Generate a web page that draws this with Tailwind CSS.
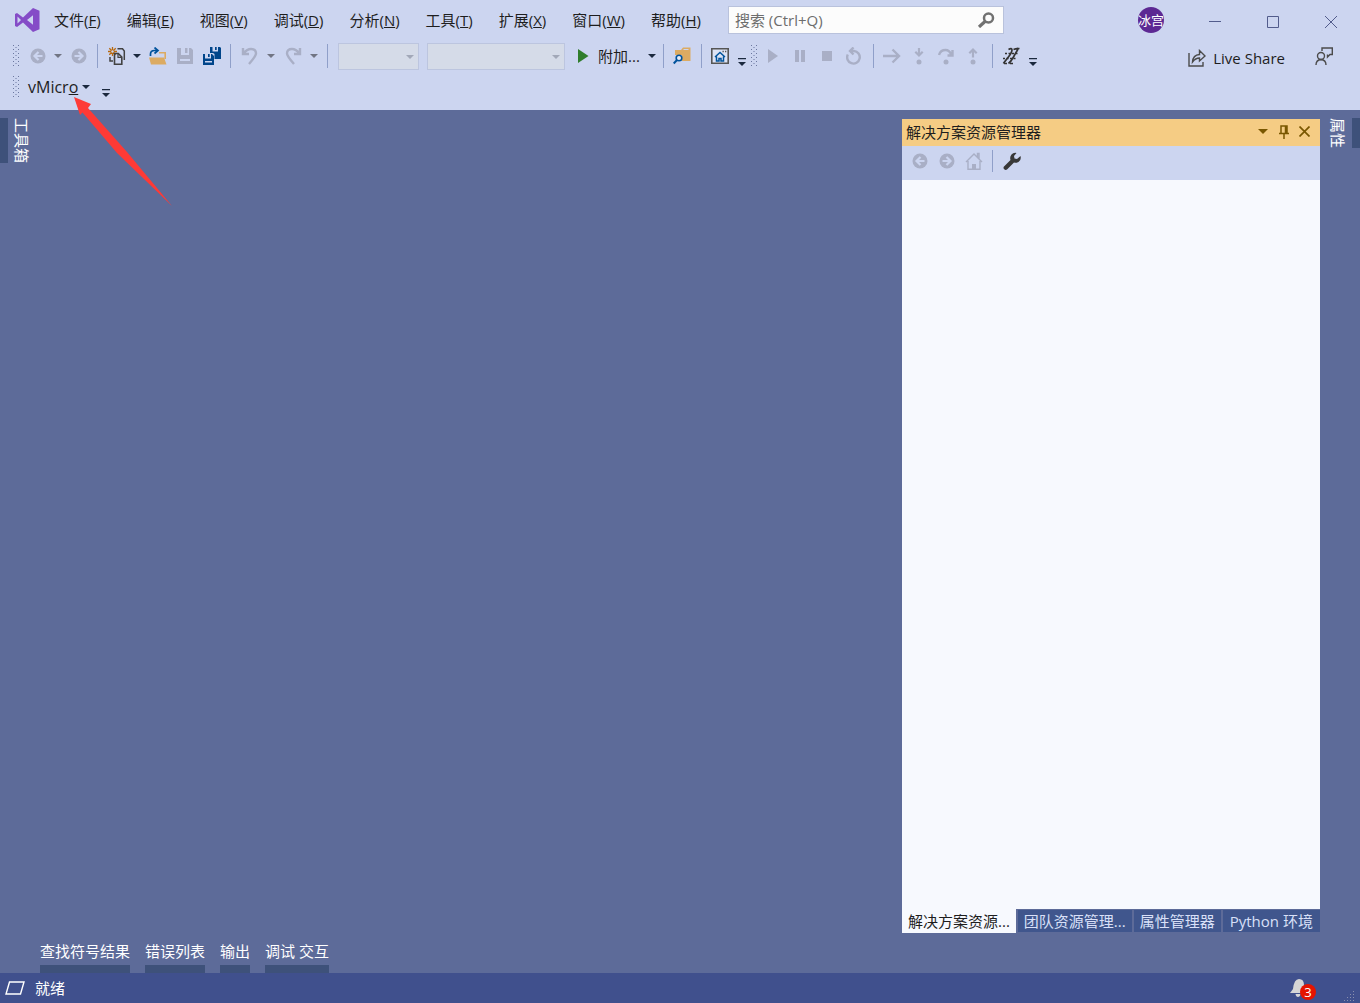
<!DOCTYPE html>
<html lang="zh-CN">
<head>
  <meta charset="UTF-8" />
  <meta name="viewport" content="width=device-width, initial-scale=1" />
  <title>Visual Studio</title>
  <script src="https://cdn.jsdelivr.net/npm/@tailwindcss/browser@4"></script>
</head>
<body class="relative flex min-h-screen flex-col bg-[#5d6b99] font-['Open_Sans','Noto_Sans_CJK_SC',sans-serif] text-[15px] leading-5 text-[#1e1e1e]">

  <!-- Shared icons -->
  <svg class="absolute size-0" aria-hidden="true">
    <symbol id="caret" viewBox="0 0 8 4"><path d="M0 0h8L4 4z" fill="currentColor" /></symbol>
    <symbol id="back" viewBox="0 0 16 16">
      <circle cx="8" cy="8" r="7.5" fill="#a9afc6" />
      <path d="M12.5 8H5M8.500 4 4.500 8l4 4" fill="none" stroke="#ccd5f0" stroke-width="2.200" />
    </symbol>
    <symbol id="forward" viewBox="0 0 16 16">
      <circle cx="8" cy="8" r="7.5" fill="#a9afc6" />
      <path d="M3.500 8H11M7.500 4l4 4-4 4" fill="none" stroke="#ccd5f0" stroke-width="2.200" />
    </symbol>
    <symbol id="overflow" viewBox="0 0 8 8">
      <path d="M0 0h8v1.300H0zM0 4h8L4 8z" fill="#1b293e" />
    </symbol>
    <symbol id="grip" viewBox="0 0 8 22">
      <path d="M1.500 0v22M6.500 0v22" stroke="#6b779f" stroke-dasharray="1 3" />
      <path d="M4 2v20" stroke="#6b779f" stroke-dasharray="1 3" />
    </symbol>
  </svg>

  <header class="bg-[#ccd5f0] pb-2">
    <!-- Title bar -->
    <div class="flex h-10 items-center">
      <svg class="mr-px ml-[15px] h-6 w-[25px] shrink-0" viewBox="0 0 25 24" aria-label="Visual Studio">
        <path fill-rule="evenodd" fill="#854cc7" d="M18 0 24.500 2.700v18.600L18 24 8 14.500 2 19 0 18V6l2-1 6 4.500zM18 7.300 12 12l6 4.700zM2.500 8.500v7L6 12z" />
      </svg>
      <nav class="flex shrink-0">
        <button class="px-[13px] whitespace-nowrap">文件(<u>F</u>)</button>
        <button class="px-[13px] whitespace-nowrap">编辑(<u>E</u>)</button>
        <button class="px-[13px] whitespace-nowrap">视图(<u>V</u>)</button>
        <button class="px-[13px] whitespace-nowrap">调试(<u>D</u>)</button>
        <button class="px-[13px] whitespace-nowrap">分析(<u>N</u>)</button>
        <button class="px-[13px] whitespace-nowrap">工具(<u>T</u>)</button>
        <button class="px-[13px] whitespace-nowrap">扩展(<u>X</u>)</button>
        <button class="px-[13px] whitespace-nowrap">窗口(<u>W</u>)</button>
        <button class="px-[13px] whitespace-nowrap">帮助(<u>H</u>)</button>
      </nav>
      <div class="ml-[14px] flex h-7 w-[276px] items-center border border-[#b9c2dc] bg-[#fcfcfc] pr-2 pl-1.5">
        <input type="text" aria-label="搜索" placeholder="搜索 (Ctrl+Q)" class="min-w-0 flex-1 bg-transparent outline-none placeholder:text-[#6d6d6d]" />
        <svg class="h-4 w-[18px]" viewBox="0 0 18 16">
          <circle cx="11.500" cy="6" r="4.500" fill="none" stroke="#717171" stroke-width="2.500" />
          <path d="M8.500 9 2 15" stroke="#717171" stroke-width="3.200" />
        </svg>
      </div>
      <div class="mr-[22px] ml-auto flex size-[26px] items-center justify-center overflow-hidden rounded-full bg-[#5c2893] text-[13px] whitespace-nowrap text-white">冰宫</div>
      <button class="flex w-[58px] justify-center" aria-label="最小化"><svg class="size-3" viewBox="0 0 12 12"><path d="M0 7.500h12" stroke="#525c8c" /></svg></button>
      <button class="flex w-[58px] justify-center pt-1" aria-label="最大化"><svg class="size-3" viewBox="0 0 12 12"><path d="M.5.5h11v11H.5z" fill="none" stroke="#525c8c" /></svg></button>
      <button class="flex w-[58px] justify-center pt-1" aria-label="关闭"><svg class="size-3" viewBox="0 0 12 12"><path d="m0 0 12 12M12 0 0 12" stroke="#525c8c" /></svg></button>
    </div>

    <!-- Standard and debug toolbars -->
    <div class="flex h-8 items-center pr-[27px] pl-3">
      <svg class="mr-1 h-[22px] w-2"><use href="#grip" /></svg>
      <button class="flex w-[27px] justify-center" aria-label="后退" disabled><svg class="size-4"><use href="#back" /></svg></button>
      <button class="flex w-[14px] justify-center text-[#717583]" aria-label="后退历史"><svg class="h-1 w-2"><use href="#caret" /></svg></button>
      <button class="flex w-[27px] justify-center" aria-label="前进" disabled><svg class="size-4"><use href="#forward" /></svg></button>
      <span class="flex w-[11px] justify-center"><span class="h-6 w-px bg-[#8f9fc9]"></span></span>
      <button class="flex w-[27px] justify-center" aria-label="新建项目">
        <svg class="size-[18px]" viewBox="0 0 18 18">
          <path d="M4.500 0v9M0 4.500h9M1.300 1.300l6.400 6.400M7.700 1.300 1.300 7.700" stroke="#b9690e" stroke-width="1.300" />
          <circle cx="4.500" cy="4.500" r="1.200" fill="#ccd5f0" />
          <path d="M9.500 1.700h5L16.300 4v9M2 10v4h3" fill="none" stroke="#424242" stroke-width="1.500" />
          <path d="M6.500 17.200V6.500h3.800l3.500 3.500v7.200z" fill="none" stroke="#424242" stroke-width="1.600" />
          <path d="M10 6.500v3.800h3.800" fill="none" stroke="#424242" stroke-width="1.200" />
        </svg>
      </button>
      <button class="flex w-[14px] justify-center text-[#1b293e]" aria-label="新建列表"><svg class="h-1 w-2"><use href="#caret" /></svg></button>
      <button class="flex w-[27px] justify-center" aria-label="打开">
        <svg class="size-[18px]" viewBox="0 0 18 18">
          <path d="M1.500 9V7q0-3.500 4-3.500h3M5.500.500 9 3.500l-3.500 3" fill="none" stroke="#00539c" stroke-width="1.700" />
          <path d="M10 5.700h6.200V12" fill="none" stroke="#dcab62" stroke-width="1.600" />
          <path d="M0 10.500h3.500L5.500 17.500H2zM3.500 10.500h11.500l2.500 7H3.500z" fill="#dcab62" />
        </svg>
      </button>
      <button class="flex w-[27px] justify-center" aria-label="保存" disabled>
        <svg class="size-4" viewBox="0 0 16 16"><path fill-rule="evenodd" fill="#a9afc6" d="M0 0h4v7h8V0h2l2 2v14H0zM8 0h2.500v5H8zM3 11v2h10v-2z" /></svg>
      </button>
      <button class="flex w-[27px] justify-center" aria-label="全部保存">
        <svg class="size-[18px]" viewBox="0 0 18 18">
          <path fill="#00458a" d="M7 0h2.500v4.500H15V0h2l1 1v11h-6.500V7L10 6H7zM12 0h1.700v3H12z" />
          <path fill="#00458a" d="M0 7h2v4.500h6V7h1l2 2v9H0zM5 7h1.700v3H5z" />
          <path fill="#ccd5f0" d="M2 14h7v1.500H2z" />
        </svg>
      </button>
      <span class="flex w-[11px] justify-center"><span class="h-6 w-px bg-[#8f9fc9]"></span></span>
      <button class="flex w-[27px] justify-center" aria-label="撤消" disabled>
        <svg class="size-[18px]" viewBox="0 0 18 18"><path d="M2 1v6h6M2.500 6.500Q6 2 10 2q5 0 5 4.500Q15 9 8 17" fill="none" stroke="#a9afc6" stroke-width="2.400" /></svg>
      </button>
      <button class="flex w-4 justify-center text-[#717583]" aria-label="撤消列表"><svg class="h-1 w-2"><use href="#caret" /></svg></button>
      <button class="flex w-[27px] justify-center" aria-label="恢复" disabled>
        <svg class="size-[18px]" viewBox="0 0 18 18"><path d="M16 1v6h-6M15.500 6.500Q12 2 8 2 3 2 3 6.500 3 9 10 17" fill="none" stroke="#a9afc6" stroke-width="2.400" /></svg>
      </button>
      <button class="flex w-4 justify-center text-[#717583]" aria-label="恢复列表"><svg class="h-1 w-2"><use href="#caret" /></svg></button>
      <span class="flex w-[11px] justify-center"><span class="h-6 w-px bg-[#8f9fc9]"></span></span>
      <div class="relative ml-[5px] text-[#a2a8b8]">
        <select class="block h-[27px] w-[81px] appearance-none border border-[#bcc5df] bg-[#d5dbe8]" aria-label="解决方案配置" disabled></select>
        <svg class="absolute top-3 right-[5px] h-1 w-2"><use href="#caret" /></svg>
      </div>
      <div class="relative ml-2 text-[#a2a8b8]">
        <select class="block h-[27px] w-[138px] appearance-none border border-[#bcc5df] bg-[#d5dbe8]" aria-label="解决方案平台" disabled></select>
        <svg class="absolute top-3 right-[5px] h-1 w-2"><use href="#caret" /></svg>
      </div>
      <button class="ml-2 flex items-center gap-2 pr-0.5 pl-[5px] whitespace-nowrap">
        <svg class="h-[14px] w-3" viewBox="0 0 12 14"><path d="M0 0v14l10.500-7z" fill="#2f7d2c" /></svg>
        附加...
        <svg class="h-1 w-2 text-[#1b293e]"><use href="#caret" /></svg>
      </button>
      <span class="flex w-[11px] justify-center"><span class="h-6 w-px bg-[#8f9fc9]"></span></span>
      <button class="flex w-[27px] justify-center" aria-label="在文件中查找">
        <svg class="size-[18px]" viewBox="0 0 18 18">
          <path d="M2 3h6l2-2.500h7.500V14H9V8H2z" fill="#dcab62" />
          <path d="M10.500 2.500h5" stroke="#ccd5f0" />
          <circle cx="6" cy="11" r="2.800" fill="#e9edf8" stroke="#00539c" stroke-width="1.600" />
          <path d="M4 13 .7 16.500" stroke="#00539c" stroke-width="2" />
        </svg>
      </button>
      <span class="flex w-[11px] justify-center"><span class="h-6 w-px bg-[#8f9fc9]"></span></span>
      <button class="flex w-[27px] justify-center" aria-label="起始页">
        <svg class="h-4 w-[18px]" viewBox="0 0 18 16">
          <path d="M.8.8h16.400v14.400H.8z" fill="#dde3f4" stroke="#555" stroke-width="1.600" />
          <path d="M11.500 3.500h1.300M14 3.500h1.300" stroke="#555" stroke-width="1.300" />
          <path d="m4 9 5-4.500L14 9M5.500 8.500V13H8v-2.500h2V13h2.500V8.500" fill="none" stroke="#00539c" stroke-width="1.500" />
        </svg>
      </button>
      <button class="flex w-4 justify-center pt-3" aria-label="工具栏选项"><svg class="size-2"><use href="#overflow" /></svg></button>
      <svg class="mr-0.5 h-[22px] w-2"><use href="#grip" /></svg>
      <button class="flex w-[27px] justify-center" aria-label="继续" disabled><svg class="h-[14px] w-[10px]" viewBox="0 0 10 14"><path d="M0 0v14l10-7z" fill="#a9afc6" /></svg></button>
      <button class="flex w-[27px] justify-center" aria-label="全部中断" disabled><svg class="h-3 w-[10px]" viewBox="0 0 10 12"><path d="M0 0h4v12H0zM6 0h4v12H6z" fill="#a9afc6" /></svg></button>
      <button class="flex w-[27px] justify-center" aria-label="停止调试" disabled><svg class="size-[10px]" viewBox="0 0 10 10"><path d="M0 0h10v10H0z" fill="#a9afc6" /></svg></button>
      <button class="flex w-[27px] justify-center" aria-label="重新启动" disabled>
        <svg class="h-[18px] w-4" viewBox="0 0 16 18"><path d="M1.800 7.500A6.300 6.300 0 1 0 8 4H4M7.500.500 4 4l3.500 3.500" fill="none" stroke="#a9afc6" stroke-width="2.400" /></svg>
      </button>
      <span class="flex w-[11px] justify-center"><span class="h-6 w-px bg-[#8f9fc9]"></span></span>
      <button class="flex w-[27px] justify-center" aria-label="显示下一语句" disabled>
        <svg class="size-[18px]" viewBox="0 0 18 18"><path d="M0 9h16M9.500 2.500 16 9l-6.500 6.500" fill="none" stroke="#a9afc6" stroke-width="2.400" /></svg>
      </button>
      <button class="flex w-[27px] justify-center" aria-label="逐语句" disabled>
        <svg class="h-[18px] w-4" viewBox="0 0 16 18"><path d="M8 1v7M4.300 4.800 8 8.500l3.700-3.700" fill="none" stroke="#a9afc6" stroke-width="2.200" /><circle cx="8" cy="15" r="2.500" fill="#a9afc6" /></svg>
      </button>
      <button class="flex w-[27px] justify-center" aria-label="逐过程" disabled>
        <svg class="h-[18px] w-4" viewBox="0 0 16 18"><path d="M1 8Q2.500 3 7.500 3q4 0 6 5M14.500 3v5.500H9.500" fill="none" stroke="#a9afc6" stroke-width="2.400" /><circle cx="8" cy="15" r="2.500" fill="#a9afc6" /></svg>
      </button>
      <button class="flex w-[27px] justify-center" aria-label="跳出" disabled>
        <svg class="h-[18px] w-4" viewBox="0 0 16 18"><path d="M8 10.500V3M4.300 6.200 8 2.500l3.700 3.700" fill="none" stroke="#a9afc6" stroke-width="2.200" /><circle cx="8" cy="15" r="2.500" fill="#a9afc6" /></svg>
      </button>
      <span class="flex w-[11px] justify-center"><span class="h-6 w-px bg-[#8f9fc9]"></span></span>
      <button class="flex w-[27px] justify-center" aria-label="十六进制显示">
        <svg class="size-[18px]" viewBox="0 0 18 18" fill="none" stroke="#333" stroke-width="1.700">
          <path d="M6.500 2.500Q10 .5 10 3T6 10.500 1.500 16.500M11.500 2.500Q17 .5 15.500 3T11.500 10 6.500 16.500" />
          <path d="M1 11.500h14M3 6.500h13" stroke-dasharray="2 1.500" stroke-width="1.500" />
          <path d="M2 16.500h3M8 16.500h3M15 1.500h2.500" stroke-width="1.500" />
        </svg>
      </button>
      <button class="flex w-4 justify-center pt-3" aria-label="工具栏选项"><svg class="size-2"><use href="#overflow" /></svg></button>

      <button class="ml-auto flex items-center gap-[7px] pt-1 whitespace-nowrap">
        <svg class="size-[18px]" viewBox="0 0 18 18" fill="none" stroke="#4b4b4b" stroke-width="1.400">
          <path d="M1 4v13h14v-4" />
          <path d="M4.500 13Q5 6 11.500 5.500V1.500L17 7l-5.500 5V9Q7.500 9 4.500 13z" />
        </svg>
        Live Share
      </button>
      <button class="ml-[30px]" aria-label="发送反馈">
        <svg class="size-[18px]" viewBox="0 0 18 18" fill="none" stroke="#4b4b4b" stroke-width="1.400">
          <path d="M7 4V1h10.300v6.500H15L12.500 10V7.500" />
          <circle cx="6" cy="9" r="3.500" />
          <path d="M1 18q0-5 5-5.500Q11 13 11 18" />
        </svg>
      </button>
    </div>

    <!-- vMicro toolbar -->
    <div class="flex h-[30px] items-center pl-3">
      <svg class="mr-2 h-[22px] w-2"><use href="#grip" /></svg>
      <button class="flex items-center gap-1 text-base leading-5">
        <span>vMicr<u>o</u></span>
        <svg class="h-1 w-2 text-[#1b293e]"><use href="#caret" /></svg>
      </button>
      <button class="ml-2 flex w-4 justify-center pt-3" aria-label="工具栏选项"><svg class="size-2"><use href="#overflow" /></svg></button>
    </div>
  </header>

  <main class="flex flex-1">
    <!-- Left auto-hide strip -->
    <div class="flex-1 pt-2">
      <button class="border-l-8 border-[#3e517a] pl-1 text-white [text-orientation:sideways] [writing-mode:vertical-rl]">工具箱</button>
    </div>

    <!-- Solution Explorer -->
    <section class="mt-[9px] flex w-[418px] flex-col">
      <div class="flex h-[27px] items-center bg-[#f5cc84] pr-[5px] pb-0.5 pl-1">
        <h2 class="flex-1">解决方案资源管理器</h2>
        <button class="flex w-[21px] justify-center text-[#7a5700]" aria-label="窗口位置"><svg class="h-[5px] w-[10px]"><use href="#caret" /></svg></button>
        <button class="flex w-[21px] justify-center" aria-label="自动隐藏">
          <svg class="h-[14px] w-[10px]" viewBox="0 0 10 14"><path d="M2 8.500V1h6v7.500M6.500 1v7.500M0 8.500h10M5 9v5" fill="none" stroke="#7a5700" stroke-width="1.500" /></svg>
        </button>
        <button class="flex w-[21px] justify-center" aria-label="关闭">
          <svg class="size-[11px]" viewBox="0 0 11 11"><path d="m.5.5 10 10M10.500.500l-10 10" stroke="#7a5700" stroke-width="1.700" /></svg>
        </button>
      </div>
      <div class="flex h-[34px] items-center bg-[#ccd5f0] pb-1 pl-1">
        <button class="flex w-[27px] justify-center" aria-label="后退" disabled><svg class="size-4"><use href="#back" /></svg></button>
        <button class="flex w-[27px] justify-center" aria-label="前进" disabled><svg class="size-4"><use href="#forward" /></svg></button>
        <button class="flex w-[27px] justify-center" aria-label="主页" disabled>
          <svg class="size-[18px]" viewBox="0 0 18 18">
            <path d="M1 10 9 2l8 8M3 9v8.200h12V9M12.500 5V1.500H14V7" fill="none" stroke="#a9afc6" stroke-width="1.400" />
            <path d="M7 12h4v6H7z" fill="#a9afc6" />
          </svg>
        </button>
        <span class="flex w-[11px] justify-center"><span class="h-[22px] w-px bg-[#8f9fc9]"></span></span>
        <button class="flex w-[27px] justify-center" aria-label="属性">
          <svg class="size-[18px]" viewBox="0 0 18 18">
            <path d="M13.500 1 11 4l.5 2.500L14 7l3.500-3q1 4-2 6-2 1.300-4.500.5L4 17.500q-1.500 1-3-.5-1-1.500 0-2.500L7.500 8Q6.500 5 8.500 2.500 10.500.300 13.500 1z" fill="#383838" />
          </svg>
        </button>
      </div>
      <div class="flex-1 bg-[#f7f9fe]"></div>
      <div class="flex h-6 items-start gap-0.5 whitespace-nowrap text-[#d9e0f8]">
        <button class="h-6 bg-[#f7f9fe] px-1.5 text-[#1e1e1e]">解决方案资源...</button>
        <button class="mt-px h-[22px] bg-[#40568d] px-1.5">团队资源管理...</button>
        <button class="mt-px h-[22px] bg-[#40568d] px-1.5">属性管理器</button>
        <button class="mt-px h-[22px] flex-1 bg-[#40568d]">Python 环境</button>
      </div>
    </section>

    <!-- Right auto-hide strip -->
    <div class="flex w-10 items-start justify-end pt-2">
      <button class="border-r-8 border-[#3e517a] pr-1 text-white [text-orientation:sideways] [writing-mode:vertical-rl]">属性</button>
    </div>
  </main>

  <!-- Bottom auto-hide tabs -->
  <div class="flex h-10 items-end gap-[15px] pl-10 text-white">
    <button class="border-b-8 border-[#3e517a] leading-7">查找符号结果</button>
    <button class="border-b-8 border-[#3e517a] leading-7">错误列表</button>
    <button class="border-b-8 border-[#3e517a] leading-7">输出</button>
    <button class="border-b-8 border-[#3e517a] leading-7">调试 交互</button>
  </div>

  <!-- Status bar -->
  <footer class="flex h-[30px] items-center bg-[#40508d] pr-1 pl-[5px] text-white">
    <svg class="mr-2.5 h-[14px] w-5" viewBox="0 0 20 14"><path d="M4.500 1H19l-3.500 12H1z" fill="none" stroke="#fff" stroke-width="1.400" /></svg>
    <span class="flex-1">就绪</span>
    <button class="relative mr-7 h-5 w-[26px]" aria-label="通知">
      <svg class="h-[18px] w-4" viewBox="0 0 16 18"><path d="M9 0q5 0 5 6 0 3-1 6l1 2H0l3-4q1-10 6-10zM5.500 15h5q-.5 3-2.500 3t-2.500-3z" fill="#d6d6d6" /></svg>
      <span class="absolute right-0 -bottom-0.5 size-4 rounded-full bg-[#e51400] text-[13px] leading-4">3</span>
    </button>
    <svg class="h-3 w-3 self-end" viewBox="0 0 12 12">
      <path d="M9 0h1v1H9zM6 3h1v1H6zM9 3h1v1H9zM3 6h1v1H3zM6 6h1v1H6zM9 6h1v1H9zM0 9h1v1H0zM3 9h1v1H3zM6 9h1v1H6zM9 9h1v1H9z" fill="#8a8fae" />
    </svg>
  </footer>

  <!-- Pointer to the vMicro menu -->
  <svg class="pointer-events-none absolute top-[97px] left-[74px] h-[109px] w-[98px]" viewBox="0 0 98 109">
    <path d="M0 0 17 7l-3 4 39 44 45 54-55-53L8.500 15.500 6 18z" fill="#fe3a36" />
  </svg>
</body>
</html>
